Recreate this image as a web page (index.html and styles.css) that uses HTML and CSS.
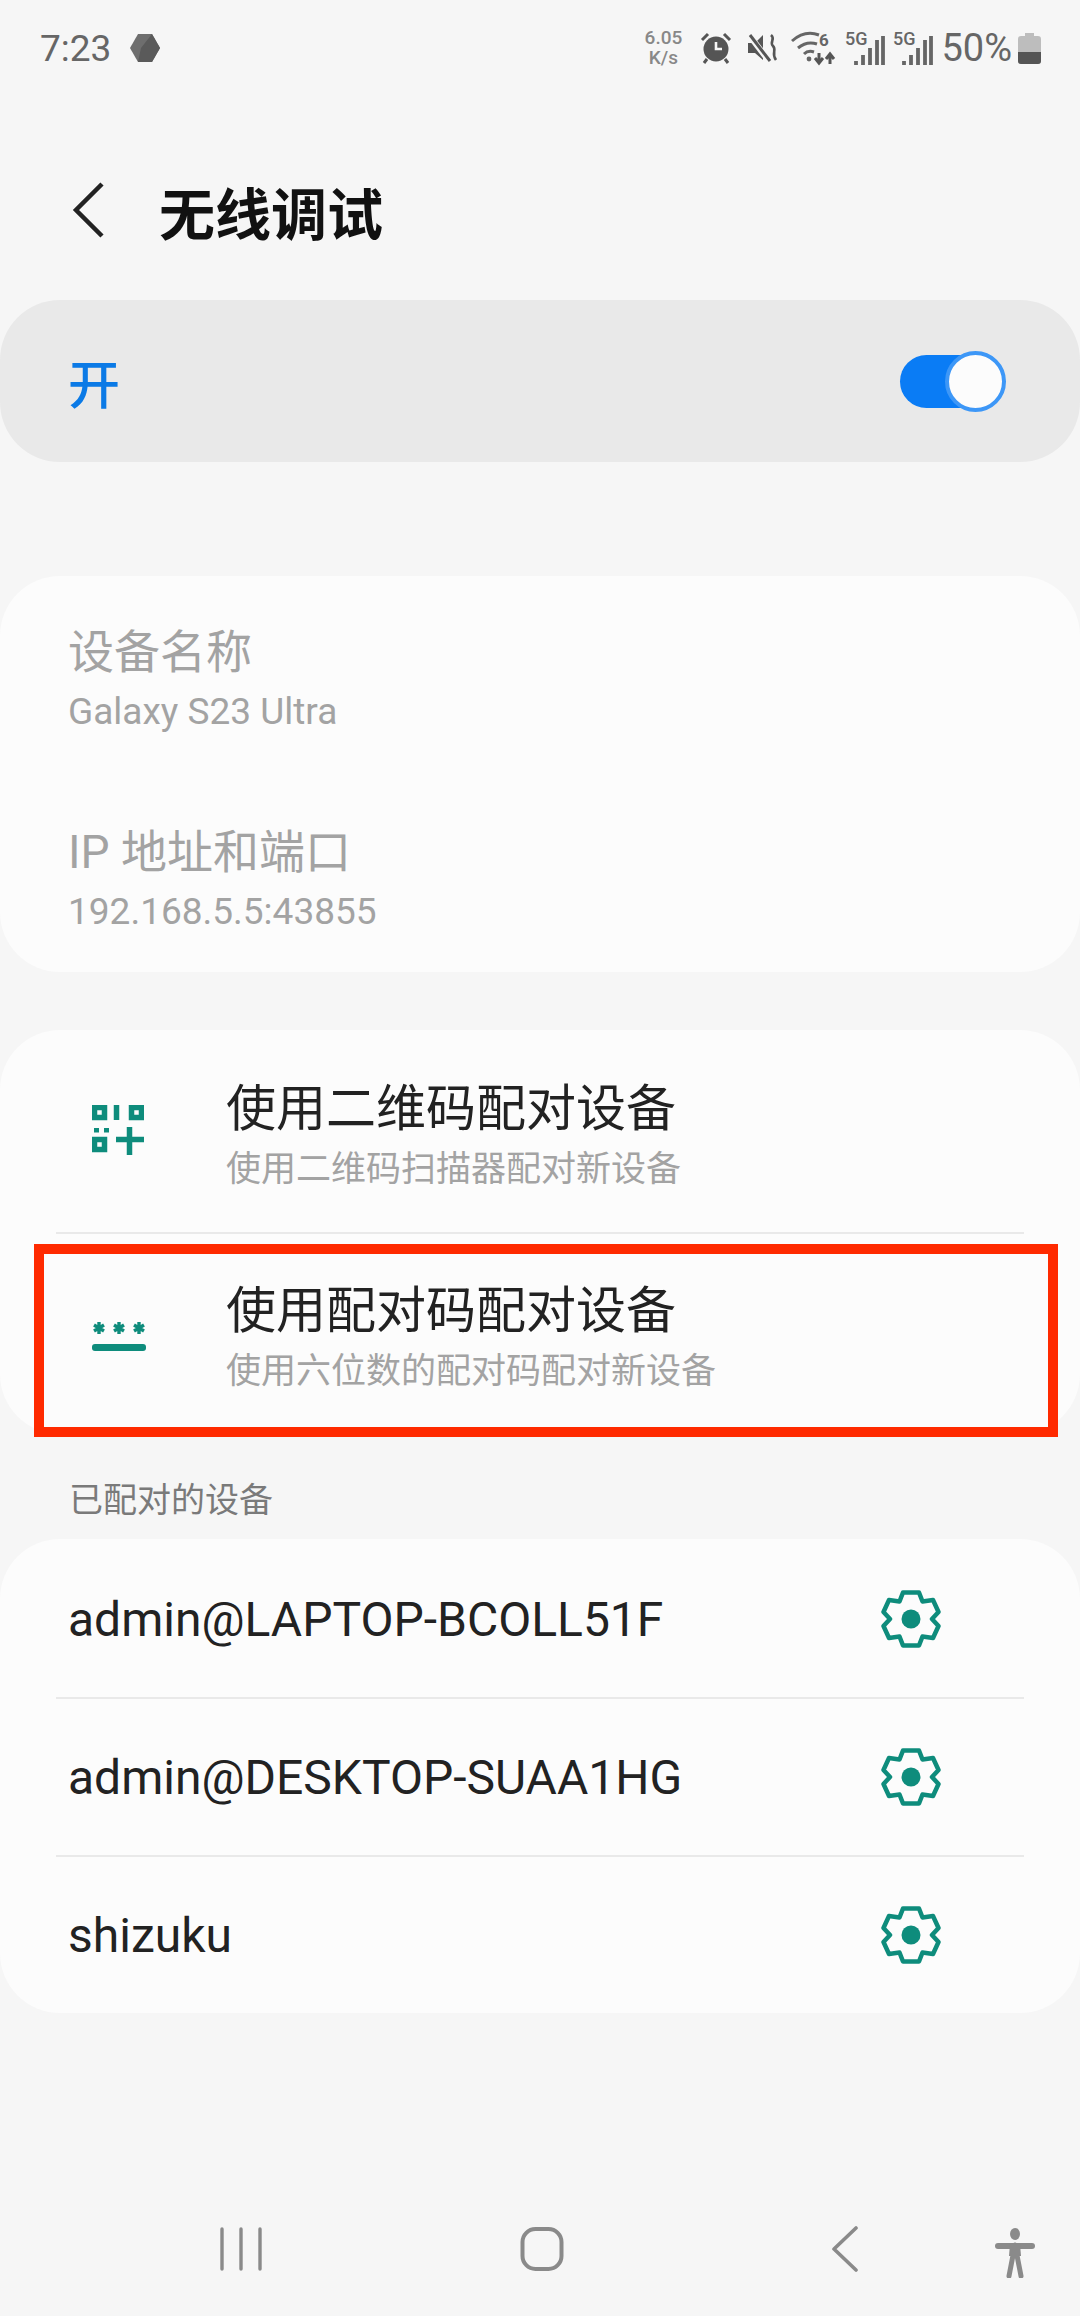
FILE: index.html
```html
<!DOCTYPE html>
<html lang="zh-CN">
<head>
    <meta charset="UTF-8">
    <meta name="viewport" content="width=device-width, initial-scale=1.0">
    <title>无线调试</title>
    <link rel="stylesheet" href="styles.css">
</head>
<body>

    <div class="statusbar">
        <span class="clock">7:23</span>
        <svg class="hex" width="32" height="32" viewBox="0 0 32 32"><path d="M9 2h14l8 14-8 14H9L1 16z" fill="#6e6e6e"/><path d="M23 2l8 14-8 14H9l3-14z" fill="#5a5a5a"/></svg>
        <div class="status-right">
            <div class="speed">6.05<br>K/s</div>
            <svg width="32" height="32" viewBox="0 0 32 32" class="alarm">
                <circle cx="16" cy="17" r="12.5" fill="#555"/>
                <path d="M16 10v7h6" fill="none" stroke="#f6f6f6" stroke-width="2.6"/>
                <path d="M2 8l6-6M30 8l-6-6M7 27l-3 4M25 27l3 4" stroke="#555" stroke-width="3" fill="none"/>
            </svg>
            <svg width="32" height="32" viewBox="0 0 32 32" class="mute">
                <path d="M1 11h7l8-8v25l-8-7H1z" fill="#555"/>
                <path d="M2 3l20 26" stroke="#f6f6f6" stroke-width="6"/>
                <path d="M3 3l20 26" stroke="#555" stroke-width="3"/>
                <path d="M24 3c5 4-2 7 2 11s-2 7 3 14" fill="none" stroke="#555" stroke-width="2.6"/>
            </svg>
            <svg width="46" height="36" viewBox="0 0 46 36" class="wifi">
                <path d="M1 11c9-8 19-9 27-6M7 18c6-5 13-6 19-4M13 24c3-3 7-3 10-2" fill="none" stroke="#666" stroke-width="3"/>
                <circle cx="18" cy="29" r="2.4" fill="#666"/>
                <path d="M28 23v8M24 28l4 5 4-5M39 34v-8M35 29l4-5 4 5" fill="none" stroke="#555" stroke-width="3"/>
                <text x="28" y="16" class="wifi-num">6</text>
            </svg>
            <svg width="40" height="40" viewBox="0 0 40 40" class="signal">
                <text x="0" y="17" class="net">5G</text>
                <path d="M11 33v4M18 27v10M25 20v17M32 12v25M38 8v29" stroke="#666" stroke-width="3.8" fill="none"/>
            </svg>
            <svg width="40" height="40" viewBox="0 0 40 40" class="signal">
                <text x="0" y="17" class="net">5G</text>
                <path d="M11 33v4M18 27v10M25 20v17M32 12v25M38 8v29" stroke="#666" stroke-width="3.8" fill="none"/>
            </svg>
            <span class="battery-text">50%</span>
            <svg width="23" height="31" viewBox="0 0 23 31" class="battery">
                <path d="M7 0h9v3h4q3 0 3 3v22q0 3-3 3H3q-3 0-3-3V6q0-3 3-3h4z" fill="#bdbdbd"/>
                <path d="M0 19h23v9q0 3-3 3H3q-3 0-3-3z" fill="#555"/>
            </svg>
        </div>
    </div>

    <div class="toolbar">
        <svg class="back" width="36" height="56" viewBox="0 0 36 56"><path d="M32 2L6 28l26 26" fill="none" stroke="#222" stroke-width="4.5"/></svg>
        <h1>无线调试</h1>
    </div>

    <div class="switch-card">
        <span class="switch-label">开</span>
        <div class="toggle">
            <div class="track"></div>
            <div class="knob"></div>
        </div>
    </div>

    <div class="card info-card">
        <div class="info-row">
            <div class="info-title">设备名称</div>
            <div class="info-value">Galaxy S23 Ultra</div>
        </div>
        <div class="info-row">
            <div class="info-title">IP 地址和端口</div>
            <div class="info-value">192.168.5.5:43855</div>
        </div>
    </div>

    <div class="card pair-card">
        <div class="pair-row">
            <div class="pair-icon">
                <svg class="qr" width="52" height="50" viewBox="0 0 52 50">
                    <g fill="none" stroke="#0e8c7c" stroke-width="5.5">
                        <rect x="2.5" y="2.500" width="10" height="10"/>
                        <rect x="39.500" y="2.500" width="10" height="10"/>
                        <rect x="2.500" y="34.500" width="10" height="10"/>
                        <path d="M24.500 0v15M37.500 22v28M24 34.500h28"/>
                    </g>
                    <g fill="#0e8c7c">
                        <rect x="2" y="23" width="5" height="4.500"/>
                        <rect x="12" y="23" width="5" height="4.500"/>
                    </g>
                </svg>
            </div>
            <div>
                <div class="pair-title">使用二维码配对设备</div>
                <div class="pair-sub">使用二维码扫描器配对新设备</div>
            </div>
        </div>
        <div class="divider"></div>
        <div class="pair-row pair-row-code">
            <div class="pair-icon">
                <svg width="54" height="32" viewBox="0 0 54 32">
                    <g fill="none" stroke="#0e8c7c" stroke-width="3.4">
                        <path d="M7 2v12M2 5l10 6M12 5L2 11"/>
                        <path d="M27 2v12M22 5l10 6M32 5l-10 6"/>
                        <path d="M47 2v12M42 5l10 6M52 5l-10 6"/>
                    </g>
                    <rect x="0" y="24" width="54" height="7" rx="3" fill="#0e8c7c"/>
                </svg>
            </div>
            <div>
                <div class="pair-title">使用配对码配对设备</div>
                <div class="pair-sub">使用六位数的配对码配对新设备</div>
            </div>
        </div>
        <div class="highlight"></div>
    </div>

    <div class="section-label">已配对的设备</div>

    <div class="card device-card">
        <div class="device-row">
            <span>admin@LAPTOP-BCOLL51F</span>
            <svg class="gear" width="60" height="60" viewBox="0 0 60 60"><use href="#gear-shape"/></svg>
        </div>
        <div class="divider"></div>
        <div class="device-row">
            <span>admin@DESKTOP-SUAA1HG</span>
            <svg class="gear" width="60" height="60" viewBox="0 0 60 60"><use href="#gear-shape"/></svg>
        </div>
        <div class="divider"></div>
        <div class="device-row">
            <span>shizuku</span>
            <svg class="gear" width="60" height="60" viewBox="0 0 60 60"><use href="#gear-shape"/></svg>
        </div>
    </div>

    <div class="navbar">
        <svg class="nav-recent" width="44" height="44" viewBox="0 0 44 44"><path d="M3 2v40M22 2v40M41 2v40" stroke="#8a8a8a" stroke-width="3.4" stroke-linecap="round" fill="none"/></svg>
        <svg class="nav-home" width="44" height="46" viewBox="0 0 44 46"><rect x="2.5" y="3" width="39" height="40" rx="13" fill="none" stroke="#8a8a8a" stroke-width="4"/></svg>
        <svg class="nav-back" width="28" height="46" viewBox="0 0 28 46"><path d="M25 2L3 23l22 21" fill="none" stroke="#8a8a8a" stroke-width="3.6" stroke-linecap="round" stroke-linejoin="round"/></svg>
        <svg class="nav-access" width="40" height="50" viewBox="0 0 40 50">
            <ellipse cx="20" cy="6" rx="5" ry="6" fill="#8a8a8a"/>
            <path d="M3 18h34" stroke="#8a8a8a" stroke-width="6" stroke-linecap="round"/>
            <path d="M20 17l-6 31M20 17l6 31" stroke="#8a8a8a" stroke-width="5" stroke-linecap="round"/>
            <path d="M15 16h10l1 12H14z" fill="#8a8a8a"/>
        </svg>
    </div>

    <svg width="0" height="0" class="defs">
        <defs>
            <g id="gear-shape">
                <path d="M22 3.500h16l3.500 9 10.500-1.500 5.500 12L51 30l6.500 7-5.500 12-10.500-1.500-3.500 9H22l-3.500-9L8 49 2.500 37 9 30l-6.500-7L8 11l10.500 1.500z" fill="none" stroke="#0e8c7c" stroke-width="4.500" stroke-linejoin="round"/>
                <circle cx="30" cy="30" r="9.500" fill="#0e8c7c"/>
            </g>
        </defs>
    </svg>

</body>
</html>
```

FILE: styles.css
```css
* {
    box-sizing: border-box;
}
html, body {
    height: 2316px;
    overflow: hidden;
}
body {
    font-family: Roboto, "Noto Sans CJK SC", sans-serif;
    margin: 0;
    padding: 0;
    background-color: #f6f6f6;
    color: #222;
}
.defs {
    position: absolute;
}

/* barra di stato */
.statusbar {
    height: 96px;
    display: flex;
    align-items: center;
    padding: 0 39px 0 40px;
    color: #666;
}
.clock {
    font-size: 37px;
}
.hex {
    margin-left: 18px;
}
.status-right {
    margin-left: auto;
    display: flex;
    align-items: center;
}
.speed {
    font-size: 19px;
    line-height: 20px;
    font-weight: 500;
    text-align: center;
    width: 46px;
    color: #888;
}
.alarm {
    margin-left: 14px;
}
.mute {
    margin-left: 15px;
}
.wifi {
    margin-left: 12px;
}
.signal {
    margin-left: 8px;
}
.net {
    font-size: 18px;
    font-weight: 500;
    fill: #666;
}
.wifi-num {
    font-size: 17px;
    font-weight: 700;
    fill: #666;
}
.battery-text {
    font-size: 38px;
    margin-left: 8px;
}
.battery {
    margin-left: 6px;
}

/* titolo */
.toolbar {
    height: 204px;
    padding: 24px 0 0 70px;
    display: flex;
    align-items: center;
}
.toolbar h1 {
    font-size: 56px;
    font-weight: 700;
    margin: 0 0 0 53px;
    color: #111;
}

.switch-card {
    height: 162px;
    background-color: #e9e9e9;
    border-radius: 60px;
    display: flex;
    align-items: center;
    justify-content: space-between;
    padding: 0 74px 0 68px;
}
.switch-label {
    font-size: 52px;
    font-weight: 500;
    color: #0b7ae6;
}
.toggle {
    width: 106px;
    height: 61px;
    display: flex;
    align-items: center;
}
.track {
    width: 90px;
    height: 53px;
    flex: none;
    border-radius: 27px;
    background-color: #0a7cf5;
}
.knob {
    width: 61px;
    height: 61px;
    flex: none;
    margin-left: -45px;
    border-radius: 50%;
    border: 4px solid #3d97f7;
    background-color: #fcfcfc;
}

.card {
    background-color: #fcfcfc;
    border-radius: 60px;
}
.info-card {
    margin-top: 114px;
    height: 396px;
    padding: 44px 68px 0;
}
.info-row {
    height: 200px;
}
.info-title {
    font-size: 46px;
    line-height: 64px;
    color: #a3a3a3;
}
.info-value {
    font-size: 37px;
    line-height: 44px;
    margin-top: 6px;
    color: #a3a3a3;
}

.pair-card {
    margin-top: 58px;
    height: 404px;
    position: relative;
    padding-top: 6px;
}
.pair-row {
    height: 196px;
    display: flex;
    align-items: center;
    padding-left: 92px;
}
.pair-row-code {
    height: 200px;
    padding-top: 4px;
}
.pair-icon {
    width: 134px;
    display: flex;
}
.qr {
    margin-top: -8px;
}
.pair-title {
    font-size: 50px;
    line-height: 68px;
    color: #222;
}
.pair-sub {
    font-size: 35px;
    line-height: 46px;
    margin-top: 4px;
    color: #a3a3a3;
}
.divider {
    height: 2px;
    margin: 0 56px;
    background-color: #e9e9e9;
}
.highlight {
    position: absolute;
    left: 34px;
    top: 214px;
    width: 1024px;
    height: 193px;
    border: 10px solid #ff2a00;
}

.section-label {
    font-size: 34px;
    line-height: 48px;
    color: #7a7a7a;
    margin: 42px 0 0 69px;
}
.device-card {
    margin-top: 15px;
    height: 474px;
    padding-top: 2px;
}
.device-row {
    height: 156px;
    display: flex;
    align-items: center;
    justify-content: space-between;
    padding: 0 139px 0 68px;
    font-size: 48px;
    color: #222;
}

/* barra di navigazione */
.navbar {
    position: relative;
    height: 60px;
    margin-top: 213px;
}
.navbar svg {
    position: absolute;
    top: 0;
}
.navbar .nav-recent {
    left: 219px;
    top: 1px;
}
.nav-home {
    left: 520px;
}
.nav-back {
    left: 831px;
}
.navbar .nav-access {
    left: 995px;
    top: 2px;
}
```
